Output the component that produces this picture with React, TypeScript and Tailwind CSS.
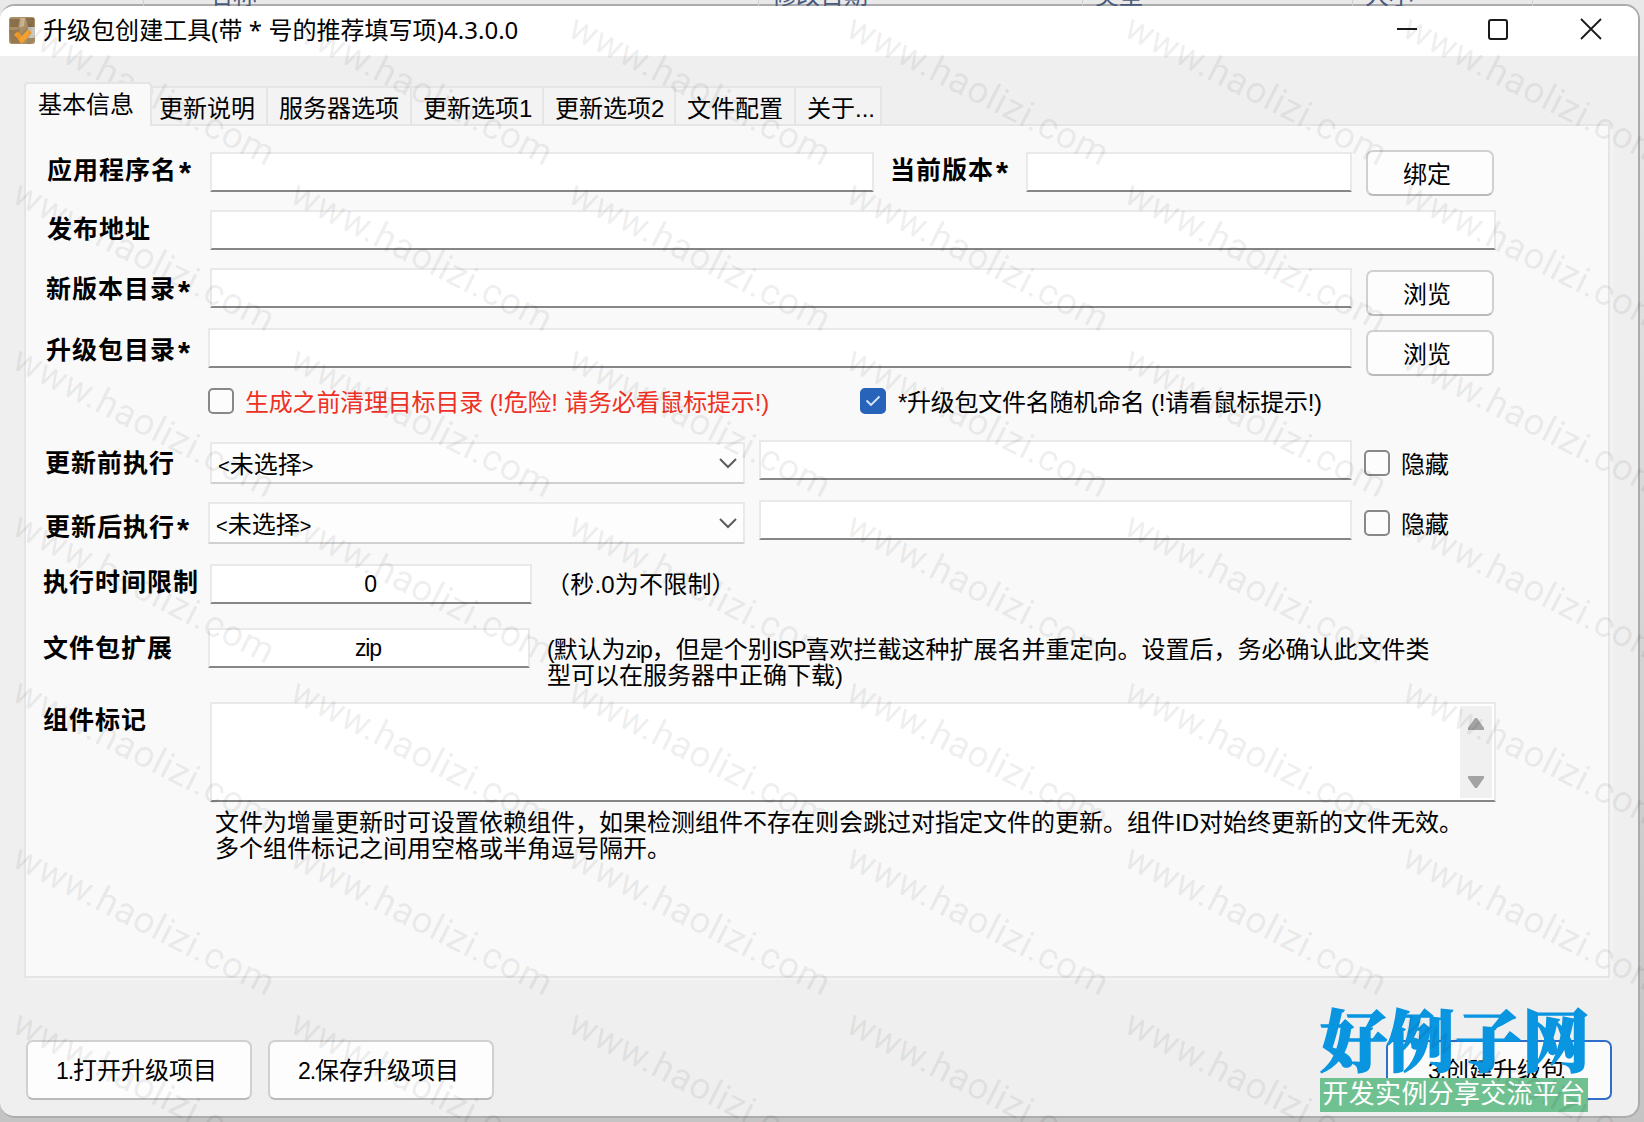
import React from 'react';

interface BoxProps {
  className?: string;
  children?: React.ReactNode;
}

const tabs = [
  { title: '更新说明', width: 'w-[116px]', pad: 'pl-[7px]' },
  { title: '服务器选项', width: 'w-[144px]', pad: 'pl-[11px]' },
  { title: '更新选项1', width: 'w-[132px]', pad: 'pl-[11px]' },
  { title: '更新选项2', width: 'w-[132px]', pad: 'pl-[11px]' },
  { title: '文件配置', width: 'w-[120px]', pad: 'pl-[11px]' },
  { title: '关于...', width: 'w-[86px]', pad: 'pl-[11px]' },
];

const columns = [
  { title: '', width: 'w-[144px]' },
  { title: '名称', width: 'w-[615px]', pad: 'pl-[65px]' },
  { title: '修改日期', width: 'w-[324px]', pad: 'pl-[13px]' },
  { title: '类型', width: 'w-[270px]', pad: 'pl-[12px]' },
  { title: '大小', width: 'w-[180px]', pad: 'pl-[12px]' },
];

const markX = [0, 1, 2, 3, 4, 5];
const markY = [0, 1, 2, 3, 4, 5, 6];

const Label: React.FC<BoxProps> = ({ className = '', children }) => (
  <div className={`shrink-0 whitespace-nowrap text-[25px] leading-[26px] font-bold tracking-[1px] ${className}`}>
    {children}
  </div>
);

const Star = () => <span className="ml-[2px] text-[31px] leading-[20px] align-[-5px]">*</span>;

// latin runs are set a little narrower than the chinese text
const Latin: React.FC<BoxProps> = ({ children }) => (
  <span className="text-[23px] leading-[20px] tracking-[-1.1px]">{children}</span>
);

const Field: React.FC<BoxProps> = ({ className = '', children }) => (
  <div className={`shrink-0 h-[40px] bg-white border-2 border-[#e9e9e9] border-b-[#868686] text-center leading-[36px] ${className}`}>
    {children}
  </div>
);

const Button: React.FC<BoxProps> = ({ className = '', children }) => (
  <button className={`shrink-0 flex items-center justify-center bg-[#fdfdfd] border-2 border-[#d0d0d0] border-b-[#bababa] rounded-[7px] ${className}`}>
    {children}
  </button>
);

const Select: React.FC<BoxProps> = ({ className = '', children }) => (
  <div className={`shrink-0 h-[42px] flex items-center justify-between bg-[#fdfdfd] border-2 border-[#e9e9e9] border-b-[#d0d0d0] pl-[6px] pr-[6px] ${className}`}>
    <span className="mt-[4px]">
      <span className="text-[20px]">&lt;</span>
      {children}
      <span className="text-[20px]">&gt;</span>
    </span>
    <svg className="w-[18px] h-[12px]" viewBox="0 0 18 12" fill="none" stroke="#5c5c5c" strokeWidth="2">
      <path d="M1 2l8 8 8-8" />
    </svg>
  </div>
);

const Checkbox: React.FC<{ checked?: boolean; className?: string }> = ({ checked = false, className = '' }) => (
  <div className={`shrink-0 w-[26px] h-[26px] rounded-[5px] border-2 ${checked ? 'bg-[#2764b9] border-[#2764b9]' : 'bg-[#fcfcfc] border-[#888888]'} ${className}`}>
    {checked && (
      <svg className="w-[22px] h-[22px]" viewBox="0 0 22 22" fill="none" stroke="#d8e6f8" strokeWidth="1.8">
        <path d="M4.5 10.5l4.5 4.5 8.5-8.5" />
      </svg>
    )}
  </div>
);

const TitleBar = () => (
  <div className="h-[50px] shrink-0 flex items-start bg-white">
    <svg className="w-[28px] h-[28px] ml-[8px] mt-[10px]" viewBox="0 0 28 28">
      <rect x="1" y="1" width="26" height="27" rx="3" fill="#a98e68" />
      <path d="M2 3h10l-2 8H2zM18 2h8v9h-6z" fill="#8a6f4b" />
      <path d="M12 2h5l-1 8-5 2z" fill="#cbb68f" />
      <path d="M20 11h7v11h-7z" fill="#c9c6c0" />
      <path d="M1 14h10v13H3z" fill="#97794f" />
      <path d="M8 17l6 7 8-9" fill="none" stroke="#f5a02c" strokeWidth="5" />
    </svg>
    <div className="ml-[7px] mt-[8px] text-[24px] leading-[32px] tracking-[0.04px] font-['Noto_Sans','Noto_Sans_CJK_SC',sans-serif] whitespace-nowrap">
      升级包创建工具(带 * 号的推荐填写项)4.3.0.0
    </div>
    <svg className="w-[206px] h-[22px] ml-auto mr-[36px] mt-[12px]" viewBox="0 0 206 22" fill="none" stroke="#1a1a1a" strokeWidth="2">
      <path d="M1 11h20" />
      <rect x="93" y="2" width="18" height="19" rx="2" />
      <path d="M185 1l20 20M205 1l-20 20" strokeWidth="1.8" />
    </svg>
  </div>
);

const App = () => {
  return (
    <div className="relative w-[1644px] h-[1122px] overflow-hidden bg-[linear-gradient(#e9e9e9,#c4c4c4)] text-black text-[24px] leading-[26px] font-['Liberation_Sans','Noto_Sans_CJK_SC',sans-serif]">
      {/* header row of the explorer window behind */}
      <div className="flex h-[6px] overflow-hidden">
        {columns.map((c, i) => (
          <div key={i} className={`shrink-0 h-[6px] border-r border-[#cfcfcf] text-[#4a5a7c] ${c.width} ${c.pad ?? ''}`}>
            <div className="-mt-[17px]">{c.title}</div>
          </div>
        ))}
      </div>

      <div className="w-[1640px] h-[1114px] -mt-[2px] flex flex-col bg-[#efefef] border-t-2 border-r-2 border-b-2 border-[#acacac] rounded-[15px] overflow-hidden">
        <TitleBar />

        <div className="flex items-end h-[68px] shrink-0 pl-[24px]">
          <div className="w-[128px] h-[44px] mb-[-2px] z-10 bg-[#f9f9f9] border-2 border-b-0 border-[#e5e5e5] rounded-t-[4px] pl-[12px] pt-[8px]">
            基本信息
          </div>
          {tabs.map((t) => (
            <div key={t.title} className={`h-[38px] bg-[#f3f3f3] border-t-2 border-r-2 border-[#e5e5e5] pt-[8px] whitespace-nowrap ${t.width} ${t.pad}`}>
              {t.title}
            </div>
          ))}
        </div>

        <div className="w-[1586px] h-[854px] ml-[24px] shrink-0 bg-[#f9f9f9] border-2 border-[#e5e5e5] shadow-[3px_2px_0_#f3f3f3] pt-[24px]">
          <div className="flex h-[60px]">
            <Label className="w-[184px] pl-[21px] pt-[7px]">应用程序名<Star /></Label>
            <Field className="w-[664px] mt-[2px]" />
            <Label className="w-[152px] pl-[16px] pt-[7px]">当前版本<Star /></Label>
            <Field className="w-[326px] mt-[2px]" />
            <Button className="w-[128px] h-[46px] ml-[14px] pt-[3px] pr-[6px]">绑定</Button>
          </div>
          <div className="flex h-[58px]">
            <Label className="w-[184px] pl-[21px] pt-[6px]">发布地址</Label>
            <Field className="w-[1286px]" />
          </div>
          <div className="flex h-[60px]">
            <Label className="w-[184px] pl-[20px] pt-[8px]">新版本目录<Star /></Label>
            <Field className="w-[1142px]" />
            <Button className="w-[128px] h-[46px] ml-[14px] mt-[2px] pt-[3px] pr-[6px]">浏览</Button>
          </div>
          <div className="flex h-[60px]">
            <Label className="w-[182px] pl-[20px] pt-[9px]">升级包目录<Star /></Label>
            <Field className="w-[1144px]" />
            <Button className="w-[128px] h-[46px] ml-[14px] mt-[2px] pt-[3px] pr-[6px]">浏览</Button>
          </div>
          <div className="flex h-[52px]">
            <Checkbox className="ml-[182px]" />
            <div className="w-[615px] ml-[11px] mt-[2px] text-[#ee3124] tracking-[-0.2px]">生成之前清理目标目录 (!危险! 请务必看鼠标提示!)</div>
            <Checkbox checked />
            <div className="ml-[12px] mt-[2px] tracking-[-0.25px]">*升级包文件名随机命名 (!请看鼠标提示!)</div>
          </div>
          <div className="flex h-[60px]">
            <Label className="w-[184px] pl-[19px] pt-[10px]">更新前执行</Label>
            <Select className="w-[535px] mt-[2px]">未选择</Select>
            <Field className="w-[593px] ml-[14px]" />
            <Checkbox className="ml-[12px] mt-[10px]" />
            <div className="ml-[11px] mt-[12px]">隐藏</div>
          </div>
          <div className="flex h-[64px]">
            <Label className="w-[182px] pl-[19px] pt-[14px]">更新后执行<Star /></Label>
            <Select className="w-[537px] mt-[2px]">未选择</Select>
            <Field className="w-[593px] ml-[14px]" />
            <Checkbox className="ml-[12px] mt-[10px]" />
            <div className="ml-[11px] mt-[12px]">隐藏</div>
          </div>
          <div className="flex h-[64px]">
            <Label className="w-[184px] pl-[17px] pt-[5px]">执行时间限制</Label>
            <Field className="w-[322px] pr-[2px]"><Latin>0</Latin></Field>
            <div className="ml-[14px] mt-[8px] tracking-[0.2px]">（秒.0为不限制）</div>
          </div>
          <div className="flex h-[74px]">
            <Label className="w-[182px] pl-[17px] pt-[7px]">文件包扩展</Label>
            <Field className="w-[322px] pr-[2px]"><Latin>zip</Latin></Field>
            <div className="ml-[17px] mt-[9px] whitespace-nowrap">
              <Latin>(</Latin>默认为<Latin>zip</Latin>，但是个别<Latin>ISP</Latin>喜欢拦截这种扩展名并重定向。设置后，务必确认此文件类
              <br />
              型可以在服务器中正确下载)
            </div>
          </div>
          <div className="flex h-[106px]">
            <Label className="w-[184px] pl-[17px] pt-[5px]">组件标记</Label>
            <div className="w-[1286px] h-[100px] flex justify-end p-[2px] bg-white border-2 border-[#e9e9e9] border-b-[#868686]">
              <div className="w-[32px] flex flex-col items-center justify-between bg-[#f0f0f0] pt-[12px] pb-[10px]">
                <svg className="w-[16px] h-[12px]" viewBox="0 0 16 12" fill="#a3a3a3">
                  <path d="M7 0h2l7 10v2H0v-2z" />
                </svg>
                <svg className="w-[16px] h-[12px]" viewBox="0 0 16 12" fill="#a3a3a3">
                  <path d="M7 12h2l7-10V0H0v2z" />
                </svg>
              </div>
            </div>
          </div>
          <div className="ml-[189px] mt-[2px] whitespace-nowrap">
            文件为增量更新时可设置依赖组件，如果检测组件不存在则会跳过对指定文件的更新。组件ID对始终更新的文件无效。
            <br />
            多个组件标记之间用空格或半角逗号隔开。
          </div>
        </div>

        <div className="flex mt-[62px] pl-[26px] pr-[26px]">
          <Button className="w-[226px] h-[60px] pr-[5px] pt-[2px]"><Latin>1.</Latin>打开升级项目</Button>
          <Button className="w-[226px] h-[60px] ml-[16px] pr-[5px] pt-[2px]"><Latin>2.</Latin>保存升级项目</Button>
          <button className="w-[226px] h-[60px] ml-auto pr-[5px] pt-[1px] bg-[#fbfbfb] border-2 border-[#2f6fc9] rounded-[7px]">
            <Latin>3.</Latin>创建升级包
          </button>
        </div>
      </div>

      {/* site logo */}
      <div className="absolute left-[1320px] top-[1002px] w-[268px]">
        <div className="h-[76px] text-[67px] leading-[70px] font-black whitespace-nowrap text-[#0995e0] font-['Noto_Serif_CJK_SC','Noto_Sans_CJK_SC',serif] tracking-[0.5px] [-webkit-text-stroke:1.5px_#0995e0]">
          好例子网
        </div>
        <div className="h-[34px] bg-[#6fc191] text-white text-[26px] leading-[33px] text-center tracking-[0.3px] whitespace-nowrap">
          开发实例分享交流平台
        </div>
      </div>

      {/* watermark */}
      {markY.map((r) =>
        markX.map((c) => (
          <span
            key={`${r}-${c}`}
            className="absolute origin-top-left rotate-[27deg] whitespace-nowrap text-[37px] leading-[37px] tracking-[0.55px] text-black/[0.075] font-[Roboto,sans-serif] pointer-events-none"
            style={{ left: 24 + c * 278, top: 8 + r * 166 }}
          >
            www.haolizi.com
          </span>
        ))
      )}
    </div>
  );
};

export default App;
